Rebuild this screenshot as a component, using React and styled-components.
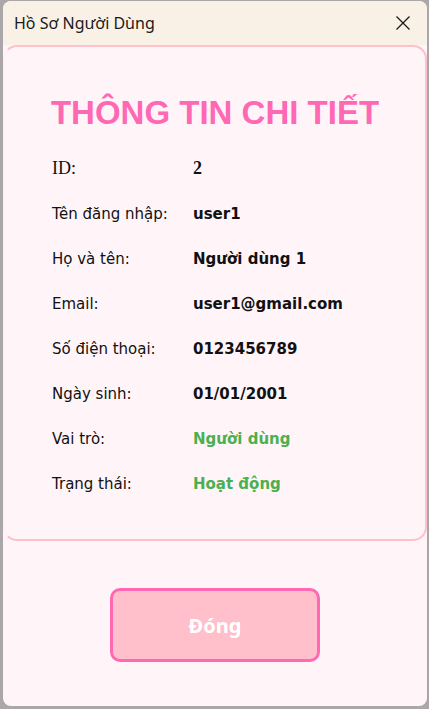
import React from 'react';
import styled, { createGlobalStyle } from 'styled-components';

const GlobalStyle = createGlobalStyle`
  html, body {
    margin: 0;
    padding: 0;
    background: #aba6aa;
  }
  body {
    width: 429px;
    height: 709px;
    overflow: hidden;
  }
`;

const rows = [
  { label: 'ID:', value: '2', serif: true },
  { label: 'Tên đăng nhập:', value: 'user1' },
  { label: 'Họ và tên:', value: 'Người dùng 1' },
  { label: 'Email:', value: 'user1@gmail.com' },
  { label: 'Số điện thoại:', value: '0123456789' },
  { label: 'Ngày sinh:', value: '01/01/2001' },
  { label: 'Vai trò:', value: 'Người dùng', green: true },
  { label: 'Trạng thái:', value: 'Hoạt động', green: true },
];

const App = () => {
  return (
    <>
      <GlobalStyle />
      <Window>
        <TitleBar>
          <WindowTitle>Hồ Sơ Người Dùng</WindowTitle>
          <CloseBtn>
            <svg width="16" height="16" viewBox="0 0 16 16">
              <path d="M1.5 1.5 L14.5 14.5 M14.5 1.5 L1.5 14.5" stroke="#1a1a1a" strokeWidth="1.3" fill="none" />
            </svg>
          </CloseBtn>
        </TitleBar>
        <Body>
          <Card>
            <Heading>THÔNG TIN CHI TIẾT</Heading>
            <InfoList>
              {rows.map((r) => (
                <Row key={r.label}>
                  <Label $serif={r.serif}>{r.label}</Label>
                  <Value $serif={r.serif} $green={r.green}>{r.value}</Value>
                </Row>
              ))}
            </InfoList>
          </Card>
          <Footer>
            <CloseButton>Đóng</CloseButton>
          </Footer>
        </Body>
      </Window>
    </>
  );
};

export default App;

const Window = styled.div`
  margin: 1px 2px 0 3px;
  width: 424px;
  height: 705px;
  border-radius: 8px;
  overflow: hidden;
  display: flex;
  flex-direction: column;
  background: #fff5f8;
`;

const TitleBar = styled.div`
  height: 44px;
  flex-shrink: 0;
  background: #f9f1e6;
  display: flex;
  align-items: center;
  justify-content: space-between;
  padding: 0 16px 0 11px;
  box-sizing: border-box;
`;

const WindowTitle = styled.div`
  font-family: 'Noto Sans', 'Open Sans', sans-serif;
  font-size: 16px;
  color: #1a1a1a;
`;

const CloseBtn = styled.div`
  width: 16px;
  height: 16px;
  display: flex;
`;

const Body = styled.div`
  flex: 1;
  display: flex;
  flex-direction: column;
`;

const Card = styled.div`
  height: 496px;
  box-sizing: border-box;
  background: #fff5f9;
  border: 2px solid #ffc0cb;
  border-left-color: #fff0f4;
  border-radius: 14px;
  padding: 46px 47px 0 47px;
  display: flex;
  flex-direction: column;
`;

const Heading = styled.h1`
  margin: 0 -40px 13px -40px;
  white-space: nowrap;
  font-family: 'Liberation Sans', Arial, sans-serif;
  font-weight: bold;
  font-size: 33px;
  line-height: 40px;
  color: #ff69b4;
  text-align: center;
`;

const InfoList = styled.div`
  display: flex;
  flex-direction: column;
`;

const Row = styled.div`
  height: 45px;
  display: grid;
  grid-template-columns: 141px 1fr;
  align-items: center;
`;

const Label = styled.span`
  font-family: ${(p) => (p.$serif ? "'Liberation Serif', 'Times New Roman', serif" : "'DejaVu Sans', Verdana, sans-serif")};
  font-size: ${(p) => (p.$serif ? '18px' : '15px')};
  color: #111;
`;

const Value = styled.span`
  font-family: ${(p) => (p.$serif ? "'Liberation Serif', 'Times New Roman', serif" : "'DejaVu Sans', Verdana, sans-serif")};
  font-size: ${(p) => (p.$serif ? '18px' : '15px')};
  font-weight: bold;
  color: ${(p) => (p.$green ? '#4caf50' : '#111')};
`;

const Footer = styled.div`
  flex: 1;
  display: flex;
  justify-content: center;
  align-items: flex-start;
  padding-top: 47px;
`;

const CloseButton = styled.button`
  width: 210px;
  height: 74px;
  box-sizing: border-box;
  background: #ffc0cb;
  border: 3px solid #ff69b4;
  border-radius: 10px;
  color: #ffffff;
  font-family: 'Noto Sans', 'Open Sans', sans-serif;
  font-weight: bold;
  font-size: 20px;
  cursor: pointer;
`;
